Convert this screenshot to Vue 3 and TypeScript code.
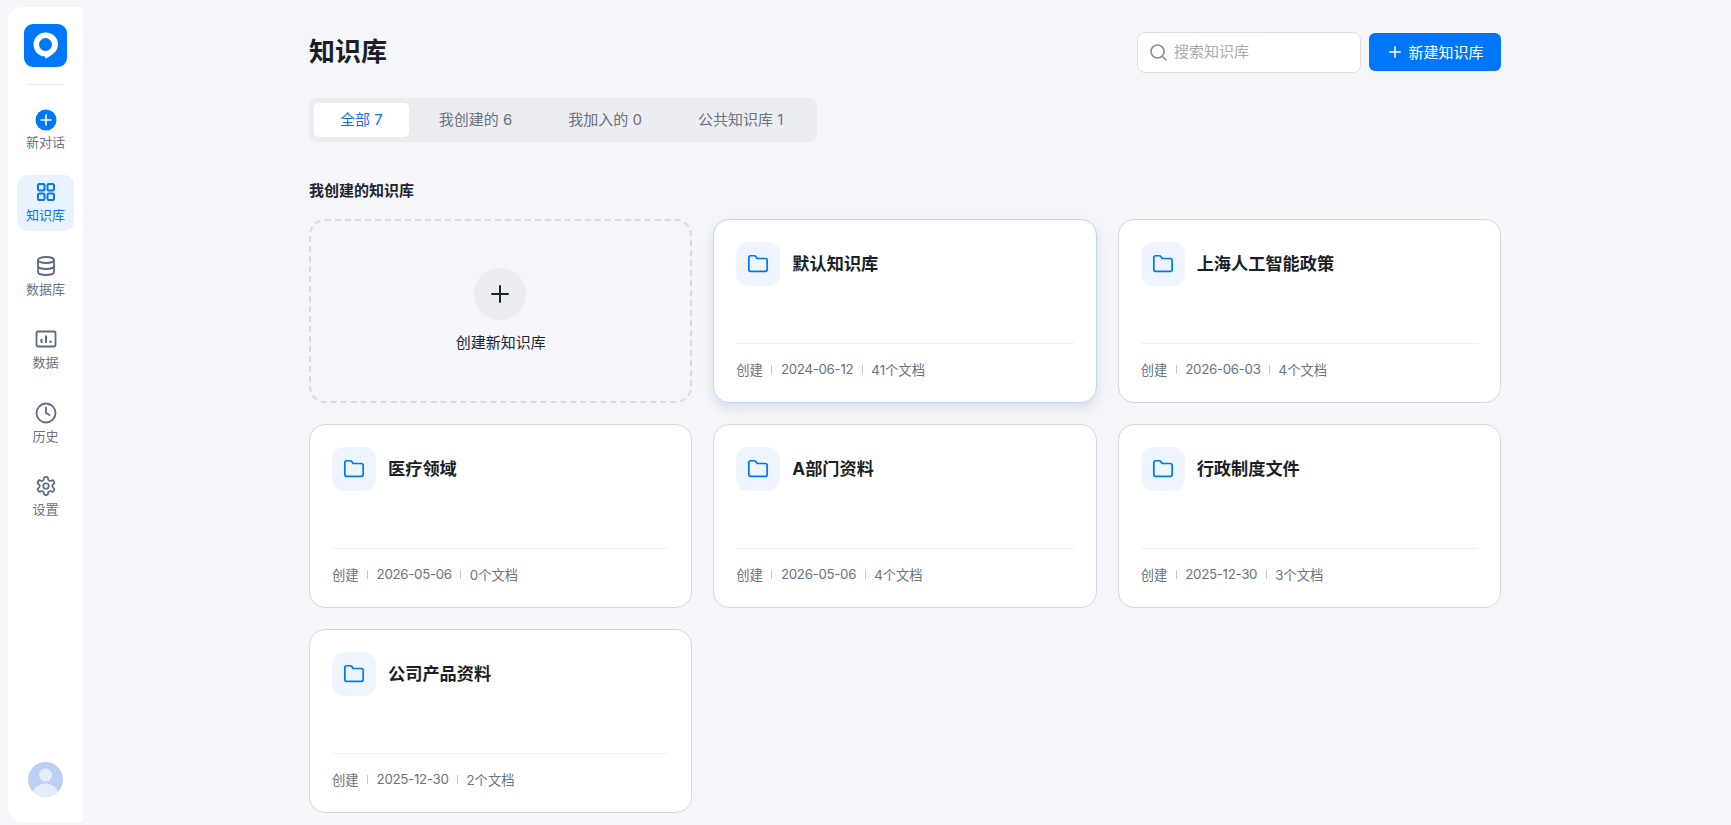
<script setup lang="ts">
interface Kb { name: string; date: string; docs: string; hot?: boolean }
const tabs = ['全部 7', '我创建的 6', '我加入的 0', '公共知识库 1']
const nav = [
  { id: 'new', label: '新对话' },
  { id: 'grid', label: '知识库', active: true },
  { id: 'db', label: '数据库' },
  { id: 'chart', label: '数据' },
  { id: 'clock', label: '历史' },
  { id: 'gear', label: '设置' },
]
const cards: Kb[] = [
  { name: '默认知识库', date: '2024-06-12', docs: '41个文档', hot: true },
  { name: '上海人工智能政策', date: '2026-06-03', docs: '4个文档' },
  { name: '医疗领域', date: '2026-05-06', docs: '0个文档' },
  { name: 'A部门资料', date: '2026-05-06', docs: '4个文档' },
  { name: '行政制度文件', date: '2025-12-30', docs: '3个文档' },
  { name: '公司产品资料', date: '2025-12-30', docs: '2个文档' },
]
</script>

<template>
  <div class="page">
    <aside class="side">
      <div class="logo">
        <svg width="28" height="28" viewBox="0 0 28 28">
          <path d="M14 .5a12 12 0 0 1 12 12c0 6-5 10.500-12.500 14.300l-.5-2.300A12 12 0 1 1 14 .5z" fill="#fff" />
          <circle cx="13.500" cy="12.500" r="6.500" fill="#0077fa" />
        </svg>
      </div>
      <div class="rule"></div>
      <nav class="nav">
        <div v-for="n in nav" :key="n.id" class="nav-item" :class="{ active: n.active, first: n.id === 'new' }">
          <svg v-if="n.id === 'new'" width="22" height="22" viewBox="0 0 22 22">
            <circle cx="11" cy="11" r="10.500" fill="#0077fa" />
            <path d="M11 6v10M6 11h10" stroke="#fff" stroke-width="1.600" stroke-linecap="round" />
          </svg>
          <svg v-else-if="n.id === 'grid'" class="ico" viewBox="0 0 22 22" fill="none" stroke="currentColor" stroke-width="2">
            <rect x="3" y="3" width="6.500" height="6.500" rx="1.200" />
            <rect x="12.500" y="3" width="6.500" height="6.500" rx="1.200" />
            <rect x="3" y="12.500" width="6.500" height="6.500" rx="1.200" />
            <rect x="12.500" y="12.500" width="6.500" height="6.500" rx="1.200" />
          </svg>
          <svg v-else-if="n.id === 'db'" class="ico" viewBox="0 0 22 22" fill="none" stroke="currentColor" stroke-width="1.800">
            <ellipse cx="11" cy="5" rx="8" ry="3" />
            <path d="M3 5v12c0 1.700 3.600 3 8 3s8-1.300 8-3V5" />
            <path d="M3 11c0 1.700 3.600 3 8 3s8-1.300 8-3" />
          </svg>
          <svg v-else-if="n.id === 'chart'" class="ico" viewBox="0 0 22 22" fill="none" stroke="currentColor" stroke-width="1.800">
            <rect x="1.500" y="3.500" width="19" height="15" rx="1.500" />
            <path d="M6.500 15v-4M11 15V7.500M15.500 15v-2.500" stroke-width="2" />
          </svg>
          <svg v-else-if="n.id === 'clock'" class="ico" viewBox="0 0 22 22" fill="none" stroke="currentColor" stroke-width="1.800" stroke-linecap="round">
            <circle cx="11" cy="11" r="9.500" />
            <path d="M11 5.500V11l3.500 2" />
          </svg>
          <svg v-else class="ico" viewBox="0 0 24 24" fill="none" stroke="currentColor" stroke-width="1.900" stroke-linejoin="round">
            <path d="M12.220 2h-.44a2 2 0 0 0-2 2v.18a2 2 0 0 1-1 1.730l-.43.25a2 2 0 0 1-2 0l-.15-.08a2 2 0 0 0-2.730.73l-.22.38a2 2 0 0 0 .73 2.730l.15.1a2 2 0 0 1 1 1.720v.51a2 2 0 0 1-1 1.740l-.15.09a2 2 0 0 0-.73 2.730l.22.38a2 2 0 0 0 2.730.73l.15-.08a2 2 0 0 1 2 0l.43.25a2 2 0 0 1 1 1.730V20a2 2 0 0 0 2 2h.44a2 2 0 0 0 2-2v-.18a2 2 0 0 1 1-1.730l.43-.25a2 2 0 0 1 2 0l.15.08a2 2 0 0 0 2.730-.73l.22-.39a2 2 0 0 0-.73-2.730l-.15-.08a2 2 0 0 1-1-1.740v-.5a2 2 0 0 1 1-1.740l.15-.09a2 2 0 0 0 .73-2.730l-.22-.38a2 2 0 0 0-2.730-.73l-.15.08a2 2 0 0 1-2 0l-.43-.25a2 2 0 0 1-1-1.730V4a2 2 0 0 0-2-2z" />
            <circle cx="12" cy="12" r="3" />
          </svg>
          <span>{{ n.label }}</span>
        </div>
      </nav>
      <div class="avatar">
        <svg width="35" height="35" viewBox="0 0 35 35">
          <defs><clipPath id="av"><circle cx="17.500" cy="17.500" r="17.500" /></clipPath></defs>
          <g clip-path="url(#av)">
            <rect width="35" height="35" fill="#bdd0f2" />
            <circle cx="17.500" cy="13" r="6.500" fill="#e6edfa" />
            <ellipse cx="17.500" cy="31" rx="12" ry="9.500" fill="#e6edfa" />
          </g>
        </svg>
      </div>
    </aside>

    <main class="main">
      <header class="head">
        <h1>知识库</h1>
        <div class="actions">
          <div class="search">
            <svg width="19" height="19" viewBox="0 0 19 19" fill="none" stroke="#8a919e" stroke-width="1.700" stroke-linecap="round">
              <circle cx="8.500" cy="8.500" r="6.500" />
              <path d="M13.500 13.500l3.500 3.500" />
            </svg>
            <span>搜索知识库</span>
          </div>
          <button class="create">
            <svg width="12" height="12" viewBox="0 0 12 12"><path d="M6 .8v10.400M.8 6h10.400" stroke="#fff" stroke-width="1.500" stroke-linecap="round" /></svg>
            新建知识库
          </button>
        </div>
      </header>

      <div class="tabs">
        <div v-for="(t, i) in tabs" :key="t" class="tab" :class="{ on: i === 0 }">{{ t }}</div>
      </div>

      <h2>我创建的知识库</h2>

      <section class="grid">
        <div class="add">
          <div class="add-circle">
            <svg width="18" height="18" viewBox="0 0 18 18"><path d="M9 1v16M1 9h16" stroke="#1f2430" stroke-width="2" stroke-linecap="round" /></svg>
          </div>
          <div class="add-label">创建新知识库</div>
        </div>
        <article v-for="c in cards" :key="c.name" class="card" :class="{ hot: c.hot }">
          <div class="card-top">
            <div class="folder">
              <svg width="22" height="22" viewBox="0 0 24 24" fill="none" stroke="#0077fa" stroke-width="1.900" stroke-linejoin="round">
                <path d="M4 20h16a2 2 0 0 0 2-2V8a2 2 0 0 0-2-2h-7.930a2 2 0 0 1-1.660-.9l-.82-1.200A2 2 0 0 0 7.930 3H4a2 2 0 0 0-2 2v13c0 1.100.9 2 2 2Z" />
              </svg>
            </div>
            <div class="name">{{ c.name }}</div>
          </div>
          <div class="meta">
            <span>创建</span><i></i><span class="date">{{ c.date }}</span><i></i><span>{{ c.docs }}</span>
          </div>
        </article>
      </section>
    </main>
  </div>
</template>

<style>
html, body { margin: 0; background: #f4f6fa; }
</style>

<style scoped>
* { box-sizing: border-box; }
.page {
  display: flex;
  height: 825px;
  padding: 7px 0 3px 8px;
  overflow: hidden;
  font-family: Inter, "Noto Sans CJK SC", sans-serif;
  color: #1f2430;
}
.side {
  width: 75px;
  flex: none;
  background: #fff;
  border-radius: 14px 0 0 14px;
  display: flex;
  flex-direction: column;
  align-items: center;
  padding-top: 17px;
  padding-bottom: 25px;
}
.logo {
  width: 43px;
  height: 43px;
  border-radius: 9px;
  background: #0077fa;
  display: flex;
  align-items: center;
  justify-content: center;
}
.rule { width: 35px; height: 1px; background: #e9ebef; margin-top: 17px; }
.nav { display: flex; flex-direction: column; align-items: center; margin-top: 16px; gap: 17.500px; flex: 1; }
.nav-item {
  width: 57px;
  height: 56px;
  padding-top: 1px;
  border-radius: 10px;
  display: flex;
  flex-direction: column;
  align-items: center;
  justify-content: center;
  gap: 4px;
  font-size: 13px;
  line-height: 18px;
  color: #6b7280;
}
.nav-item.first { gap: 2px; }
.nav-item .ico { width: 22px; height: 22px; margin: -1px; color: #5f6b80; }
.nav-item.active { background: #e8f3ff; color: #0077fa; }
.nav-item.active .ico { color: #0077fa; }
.avatar { width: 35px; height: 35px; }
.main { width: 1192px; margin-left: 226px; padding-top: 25px; }
.head { display: flex; justify-content: space-between; align-items: center; height: 41px; }
h1 { margin: -2px 0 0; font-size: 26px; font-weight: 700; line-height: 40px; color: #1c1f26; }
.actions { display: flex; align-items: center; gap: 8px; }
.search {
  width: 224px;
  height: 41px;
  background: #fff;
  border: 1px solid #dcdfe6;
  border-radius: 8px;
  display: flex;
  align-items: center;
  gap: 6px;
  padding-left: 11px;
  font-size: 15px;
  line-height: 20px;
  color: #a8abb2;
}
.search span { margin-top: -2px; }
.create {
  width: 132px;
  height: 38px;
  margin-top: -2px;
  padding: 0 0 0 3px;
  border: 0;
  border-radius: 6px;
  background: #0077fa;
  color: #fff;
  font: inherit;
  font-size: 15px;
  display: flex;
  align-items: center;
  justify-content: center;
  gap: 7px;
}
.tabs {
  display: flex;
  gap: 4px;
  margin-top: 25px;
  padding: 5px;
  height: 44px;
  width: 508px;
  background: #ecedf0;
  border-radius: 8px;
}
.tab {
  padding: 0 26px;
  font-size: 15px;
  line-height: 34px;
  white-space: nowrap;
  color: #6b7280;
  border-radius: 5px;
}
.tab.on { background: #fff; color: #0f6fef; }
h2 { margin: 39px 0 0; font-size: 15px; font-weight: 700; line-height: 20px; color: #1f2430; }
.grid {
  margin-top: 18px;
  display: grid;
  grid-template-columns: repeat(3, 1fr);
  grid-auto-rows: 183.500px;
  gap: 21.500px 21px;
}
.add {
  border: 2px dashed #d9dbe0;
  border-radius: 16px;
  padding-bottom: 1px;
  display: flex;
  flex-direction: column;
  align-items: center;
  justify-content: center;
}
.add-circle {
  width: 52px;
  height: 52px;
  margin-left: -1px;
  border-radius: 50%;
  background: #ecedf0;
  display: flex;
  align-items: center;
  justify-content: center;
}
.add-label { margin-top: 13px; font-size: 15px; line-height: 20px; color: #1f2430; }
.card {
  background: #fff;
  border: 1px solid #d5d7dc;
  border-radius: 16px;
  padding: 22px 22px 0;
  display: flex;
  flex-direction: column;
}
.card.hot { border-color: #bcd8fa; box-shadow: 0 5px 12px rgba(30, 50, 90, 0.12); }
.card-top { display: flex; align-items: flex-start; gap: 12px; height: 102px; border-bottom: 1px solid #f0f1f4; }
.folder {
  width: 44px;
  height: 44px;
  border-radius: 12px;
  background: #eff5fe;
  display: flex;
  align-items: center;
  justify-content: center;
}
.name { font-size: 17.200px; font-weight: 700; line-height: 44px; color: #1c1f26; }
.meta { display: flex; align-items: center; gap: 8.500px; height: 50px; font-size: 13.300px; color: #6b7280; }
.meta .date { letter-spacing: -0.3px; }
.meta i { width: 1px; height: 9px; background: #c4c7cd; }
</style>
